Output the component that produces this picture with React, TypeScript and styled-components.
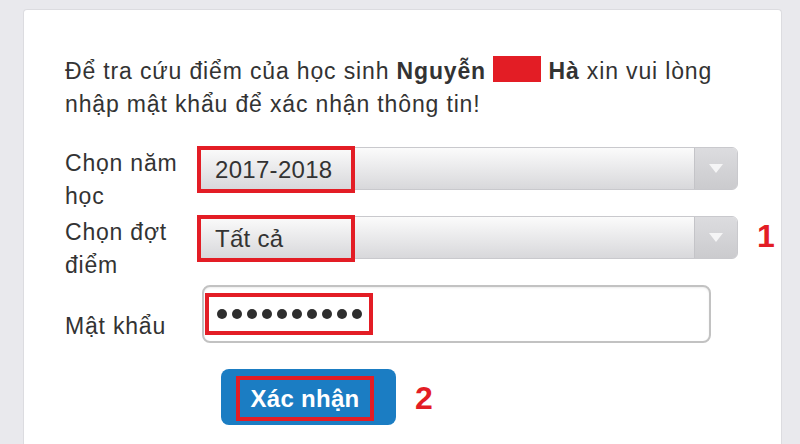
import React from "react";
import styled, { createGlobalStyle } from "styled-components";

const markRed = "#e31d25";
const textColor = "#333333";

const GlobalStyle = createGlobalStyle`
  html, body {
    margin: 0;
    padding: 0;
  }
  body {
    width: 800px;
    height: 444px;
    overflow: hidden;
    background: #e9e9ed;
    font-family: "Liberation Sans", Arial, sans-serif;
    color: ${textColor};
  }
`;

const Page = styled.div`
  height: 444px;
  padding: 9px 18px 0 23px;
  box-sizing: border-box;
`;

const Card = styled.main`
  height: 100%;
  background: #ffffff;
  border: 1px solid #dcdce0;
  border-bottom: none;
  border-radius: 4px 4px 0 0;
  padding: 45px 0 0 41px;
  box-sizing: border-box;
`;

const Intro = styled.p`
  margin: 0 0 26px;
  max-width: 690px;
  font-size: 23px;
  letter-spacing: 0.85px;
  line-height: 33px;
  b {
    font-weight: 700;
  }
`;

const Redacted = styled.span`
  display: inline-block;
  width: 48px;
  height: 26px;
  background: ${markRed};
  vertical-align: -3px;
`;

const Form = styled.form`
  display: flex;
  flex-direction: column;
  gap: 3px;
`;

const Row = styled.div<{ $align?: string }>`
  display: flex;
  align-items: ${(p) => p.$align || "flex-start"};
`;

const Label = styled.label`
  width: 132px;
  flex-shrink: 0;
  font-size: 23px;
  letter-spacing: 0.8px;
  line-height: 33px;
`;

const Select = styled.div`
  display: flex;
  width: 541px;
  height: 43px;
  box-sizing: border-box;
  border: 1px solid #c9c9cd;
  border-radius: 6px;
  background: linear-gradient(#fbfbfb, #d8d8db);
`;

const SelectValue = styled.span`
  display: flex;
  align-items: center;
  width: 158px;
  height: 47px;
  margin: -2px 0 0 -1px;
  padding-left: 14px;
  box-sizing: border-box;
  border: 4px solid ${markRed};
  font-size: 24px;
  letter-spacing: 0.3px;
`;

const SelectArrow = styled.span`
  display: flex;
  align-items: center;
  justify-content: center;
  width: 42px;
  margin-left: auto;
  border-left: 1px solid #c4c4c8;
  border-radius: 0 5px 5px 0;
  background: linear-gradient(#dcdcdf, #cbcbce);
`;

const Marker = styled.span<{ $gap: number; $top: number }>`
  align-self: flex-start;
  margin: ${(p) => p.$top}px 0 0 ${(p) => p.$gap}px;
  color: ${markRed};
  font-size: 32px;
  font-weight: 700;
  line-height: 1;
`;

const PasswordBox = styled.div`
  width: 509px;
  height: 58px;
  margin-left: 5px;
  padding: 6px 0 0 1px;
  box-sizing: border-box;
  border: 2px solid #c2c2c2;
  border-radius: 8px;
  box-shadow: inset 0 1px 2px rgba(0, 0, 0, 0.08);
`;

const PasswordValue = styled.span`
  display: flex;
  align-items: center;
  gap: 5px;
  width: 168px;
  height: 42px;
  padding-left: 8px;
  box-sizing: border-box;
  border: 4px solid ${markRed};
`;

const Dot = styled.span`
  width: 10px;
  height: 10px;
  border-radius: 50%;
  background: #2e2e2e;
`;

const Actions = styled.div`
  display: flex;
  align-items: center;
  margin-top: 23px;
  padding-left: 156px;
`;

const SubmitButton = styled.button`
  display: flex;
  align-items: flex-start;
  width: 175px;
  height: 56px;
  padding: 7px 0 0 15px;
  box-sizing: border-box;
  border: none;
  border-radius: 8px;
  background: #1b7dc3;
  font-family: inherit;
  cursor: pointer;
`;

const ButtonText = styled.span`
  display: flex;
  align-items: center;
  justify-content: center;
  width: 138px;
  height: 45px;
  box-sizing: border-box;
  border: 4px solid ${markRed};
  color: #ffffff;
  font-size: 24px;
  font-weight: 700;
  letter-spacing: 0.3px;
`;

const Arrow = () => (
  <svg width="14" height="9" viewBox="0 0 14 9">
    <path d="M0 0 L14 0 L7 9 Z" fill="#f5f5f6" />
  </svg>
);

const Dropdown = ({ value }: { value: string }) => (
  <Select>
    <SelectValue>{value}</SelectValue>
    <SelectArrow>
      <Arrow />
    </SelectArrow>
  </Select>
);

const App = () => {
  return (
    <>
      <GlobalStyle />
      <Page>
        <Card>
          <Intro>
            Để tra cứu điểm của học sinh <b>Nguyễn</b> <Redacted /> <b>Hà</b> xin vui lòng nhập mật khẩu để
            xác nhận thông tin!
          </Intro>
          <Form onSubmit={(e) => e.preventDefault()}>
            <Row>
              <Label>Chọn năm học</Label>
              <Dropdown value="2017-2018" />
            </Row>
            <Row>
              <Label>Chọn đợt điểm</Label>
              <Dropdown value="Tất cả" />
              <Marker $gap={19} $top={4}>1</Marker>
            </Row>
            <Row $align="flex-end">
              <Label>Mật khẩu</Label>
              <PasswordBox>
                <PasswordValue>
                  {Array.from({ length: 10 }).map((_, i) => (
                    <Dot key={i} />
                  ))}
                </PasswordValue>
              </PasswordBox>
            </Row>
            <Actions>
              <SubmitButton type="submit">
                <ButtonText>Xác nhận</ButtonText>
              </SubmitButton>
              <Marker $gap={19} $top={13}>2</Marker>
            </Actions>
          </Form>
        </Card>
      </Page>
    </>
  );
};

export default App;
